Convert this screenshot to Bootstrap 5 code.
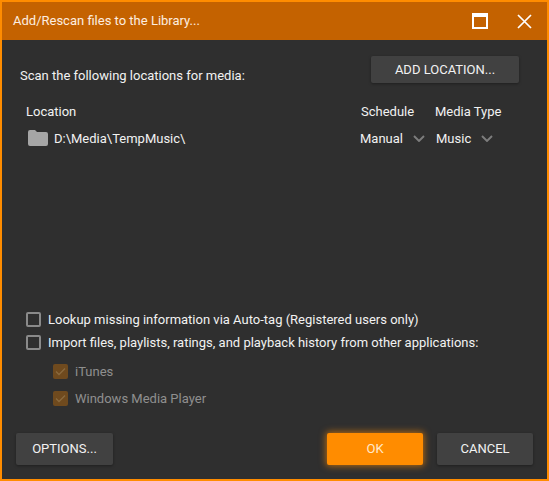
<!DOCTYPE html>
<html lang="en">
<head>
<meta charset="utf-8">
<title>Add/Rescan files to the Library...</title>
<link href="https://cdn.jsdelivr.net/npm/bootstrap@5.3.0/dist/css/bootstrap.min.css" rel="stylesheet">
<style>
html,body{height:100%;margin:0;background:#2f2f2f;}
body{font-family:Roboto,"Liberation Sans",sans-serif;font-size:13px;color:#f2f2f2;overflow:hidden;}
.dlg{height:481px;width:549px;border:2px solid #ff8c00;background:#2f2f2f;}
.dlg-title{height:38px;background:#c46200;color:#fdeee0;font-size:13px;padding-left:11px;padding-right:15px;}
.ctl-max{width:16px;height:16px;border:2px solid #fff;border-top-width:4px;margin-right:29px;}
.dlg-body{padding:16px 14px 14px 14px;}
.top-row{padding-left:4px;padding-right:14px;}
.scan-lbl{margin-top:10px;}
.tb-btn{border:0;border-radius:2px;background:#414141;color:#f2f2f2;font-size:13px;font-weight:400;box-shadow:0 1px 3px rgba(0,0,0,.35);padding:0;}
.tb-add{width:148px;height:27px;}
.tb-opt{width:97px;height:32px;}
.tb-ok{width:96px;height:32px;background:#ff8c00;color:#ffe9cc;box-shadow:0 0 7px 1px rgba(255,140,0,.65);margin-right:14px;}
.tb-cancel{width:96px;height:32px;}
.loc-grid{display:grid;grid-template-columns:335px 74px 1fr;margin-top:17px;padding-left:10px;row-gap:10px;line-height:17px;}
.sel-c{display:flex;align-items:center;}
.path{display:flex;align-items:center;gap:6px;padding-left:2px;}
.sel-sched{margin-left:-1px;width:65px;justify-content:space-between;}
.sel-media{margin-left:1px;width:57px;justify-content:space-between;}
.opts{padding-left:10px;}
.opt-line{display:flex;align-items:center;gap:7px;height:23px;}
.opt-sub{display:flex;align-items:center;gap:7px;height:27px;padding-left:27px;color:#8f8f8f;}
.ck{width:15px;height:15px;border:2px solid #8a8a8a;border-radius:2px;flex:none;}
.ck-on{background:#6f4a1e;border:0;display:flex;align-items:center;justify-content:center;}
.sub-wrap{padding-top:4px;}
.foot{margin-top:21px;}
</style>
</head>
<body>
<div class="dlg d-flex flex-column">
  <div class="dlg-title d-flex align-items-center">
    <span class="flex-grow-1">Add/Rescan files to the Library...</span>
    <span class="ctl-max"></span>
    <svg width="15" height="15" viewBox="0 0 15 15" fill="none" stroke="#fff" stroke-width="1.7"><path d="M1 1l13 13M14 1L1 14"/></svg>
  </div>
  <div class="dlg-body flex-grow-1 d-flex flex-column">
    <div class="top-row d-flex justify-content-between align-items-start">
      <span class="scan-lbl">Scan the following locations for media:</span>
      <button class="tb-btn tb-add">ADD LOCATION...</button>
    </div>
    <div class="loc-grid">
      <div>Location</div>
      <div>Schedule</div>
      <div>Media Type</div>
      <div class="path">
        <svg width="20" height="16" viewBox="0 0 20 16"><path fill="#a6a6a6" d="M2 0h5l2 2h9a2 2 0 0 1 2 2v10a2 2 0 0 1-2 2H2a2 2 0 0 1-2-2V2a2 2 0 0 1 2-2z"/></svg>
        <span>D:\Media\TempMusic\</span>
      </div>
      <div class="sel-c sel-sched"><span>Manual</span><svg width="12" height="7" viewBox="0 0 12 7" fill="none" stroke="#7d7d7d" stroke-width="1.9"><path d="M1 1l5 5 5-5"/></svg></div>
      <div class="sel-c sel-media"><span>Music</span><svg width="12" height="7" viewBox="0 0 12 7" fill="none" stroke="#7d7d7d" stroke-width="1.9"><path d="M1 1l5 5 5-5"/></svg></div>
    </div>
    <div class="flex-grow-1"></div>
    <div class="opts">
      <div class="opt-line"><span class="ck"></span><span>Lookup missing information via Auto-tag (Registered users only)</span></div>
      <div class="opt-line"><span class="ck"></span><span>Import files, playlists, ratings, and playback history from other applications:</span></div>
      <div class="sub-wrap">
        <div class="opt-sub"><span class="ck ck-on"><svg width="11" height="9" viewBox="0 0 11 9" fill="none" stroke="#8a6a3e" stroke-width="1.3"><path d="M1 4.5l3 3 6-6"/></svg></span><span>iTunes</span></div>
        <div class="opt-sub"><span class="ck ck-on"><svg width="11" height="9" viewBox="0 0 11 9" fill="none" stroke="#8a6a3e" stroke-width="1.3"><path d="M1 4.5l3 3 6-6"/></svg></span><span>Windows Media Player</span></div>
      </div>
    </div>
    <div class="foot d-flex">
      <button class="tb-btn tb-opt me-auto">OPTIONS...</button>
      <button class="tb-btn tb-ok">OK</button>
      <button class="tb-btn tb-cancel">CANCEL</button>
    </div>
  </div>
</div>
<script src="https://cdn.jsdelivr.net/npm/bootstrap@5.3.0/dist/js/bootstrap.bundle.min.js"></script>
</body>
</html>
